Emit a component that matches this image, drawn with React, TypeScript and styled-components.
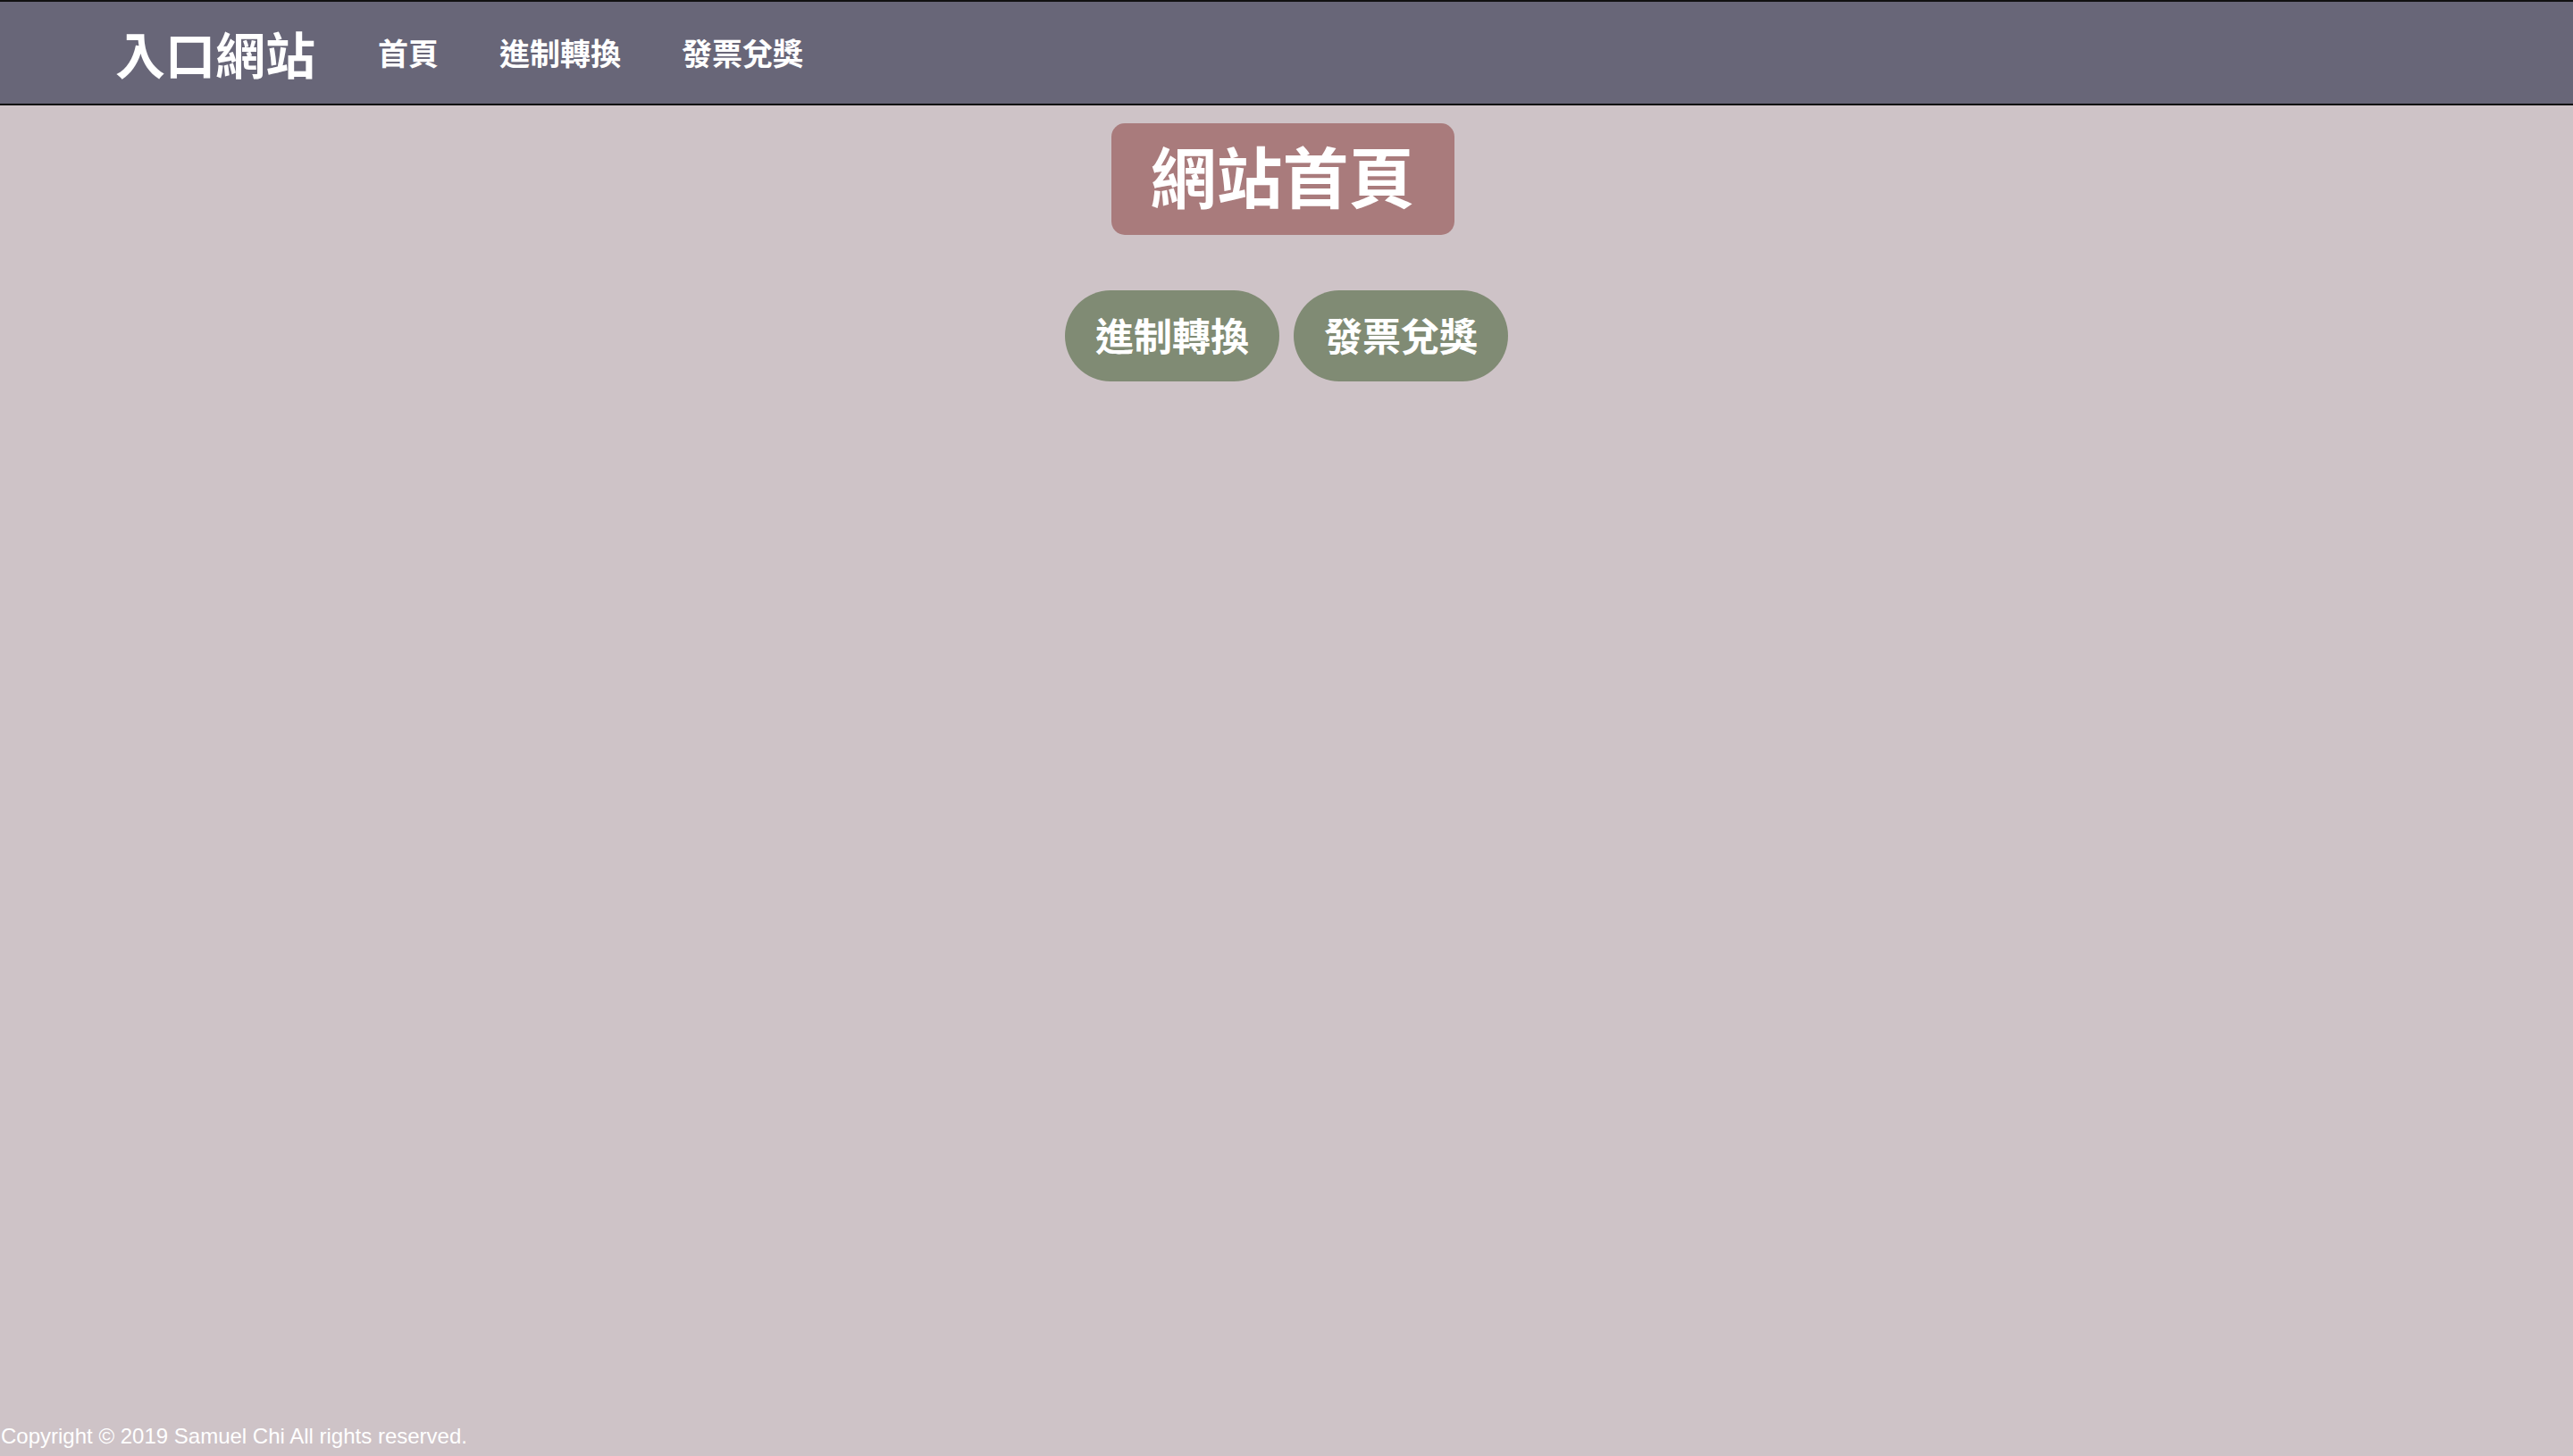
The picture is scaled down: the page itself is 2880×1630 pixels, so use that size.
import React from "react";
import styled, { createGlobalStyle } from "styled-components";

const GlobalStyle = createGlobalStyle`
  html, body {
    margin: 0;
    padding: 0;
    background: #cec3c7;
  }
  body {
    font-family: "Noto Sans CJK TC", "Noto Sans", sans-serif;
  }
  * { box-sizing: border-box; }
`;

const Page = styled.div`
  min-height: 100vh;
  display: flex;
  flex-direction: column;
  background: #cec3c7;
`;

const NavBar = styled.nav`
  height: 118px;
  display: flex;
  align-items: center;
  padding-left: 129px;
  background: #686678;
  border-top: 2px solid #111111;
  border-bottom: 2px solid #0a0a0a;
`;

const Brand = styled.a`
  font-family: "Noto Sans CJK TC", sans-serif;
  font-size: 56px;
  font-weight: 700;
  line-height: 1;
  color: #ffffff;
  text-decoration: none;
  margin-right: 36px;
`;

const NavLink = styled.a`
  font-family: "Noto Sans CJK TC", sans-serif;
  font-size: 34px;
  font-weight: 700;
  line-height: 1;
  color: #ffffff;
  text-decoration: none;
  padding: 0 34px;
`;

const Main = styled.main`
  flex: 1;
  display: flex;
  flex-direction: column;
  align-items: center;
  padding-top: 20px;
`;

const TitleBox = styled.h1`
  margin: 0 9px 0 0;
  font-family: "Noto Sans CJK TC", sans-serif;
  font-size: 74px;
  font-weight: 700;
  line-height: 89px;
  color: #ffffff;
  background: #a97b7c;
  border-radius: 15px;
  padding: 12px 44px 24px;
`;

const ButtonRow = styled.div`
  display: flex;
  gap: 16px;
  margin-top: 62px;
`;

const PillButton = styled.a`
  display: block;
  font-family: "Noto Sans CJK TC", sans-serif;
  font-size: 43px;
  font-weight: 700;
  line-height: 52px;
  color: #ffffff;
  background: #808b74;
  border-radius: 51px;
  padding: 23px 34px 27px;
  text-decoration: none;
`;

const Footer = styled.footer`
  font-family: "Liberation Sans", Arial, sans-serif;
  font-size: 24px;
  line-height: 24px;
  height: 34px;
  padding: 0 0 10px 1px;
  color: #ffffff;
`;

export default function App() {
  return (
    <>
      <GlobalStyle />
      <Page>
        <NavBar>
          <Brand href="#">入口網站</Brand>
          <NavLink href="#">首頁</NavLink>
          <NavLink href="#">進制轉換</NavLink>
          <NavLink href="#">發票兌獎</NavLink>
        </NavBar>
        <Main>
          <TitleBox>網站首頁</TitleBox>
          <ButtonRow>
            <PillButton href="#">進制轉換</PillButton>
            <PillButton href="#">發票兌獎</PillButton>
          </ButtonRow>
        </Main>
        <Footer>Copyright © 2019 Samuel Chi All rights reserved.</Footer>
      </Page>
    </>
  );
}
